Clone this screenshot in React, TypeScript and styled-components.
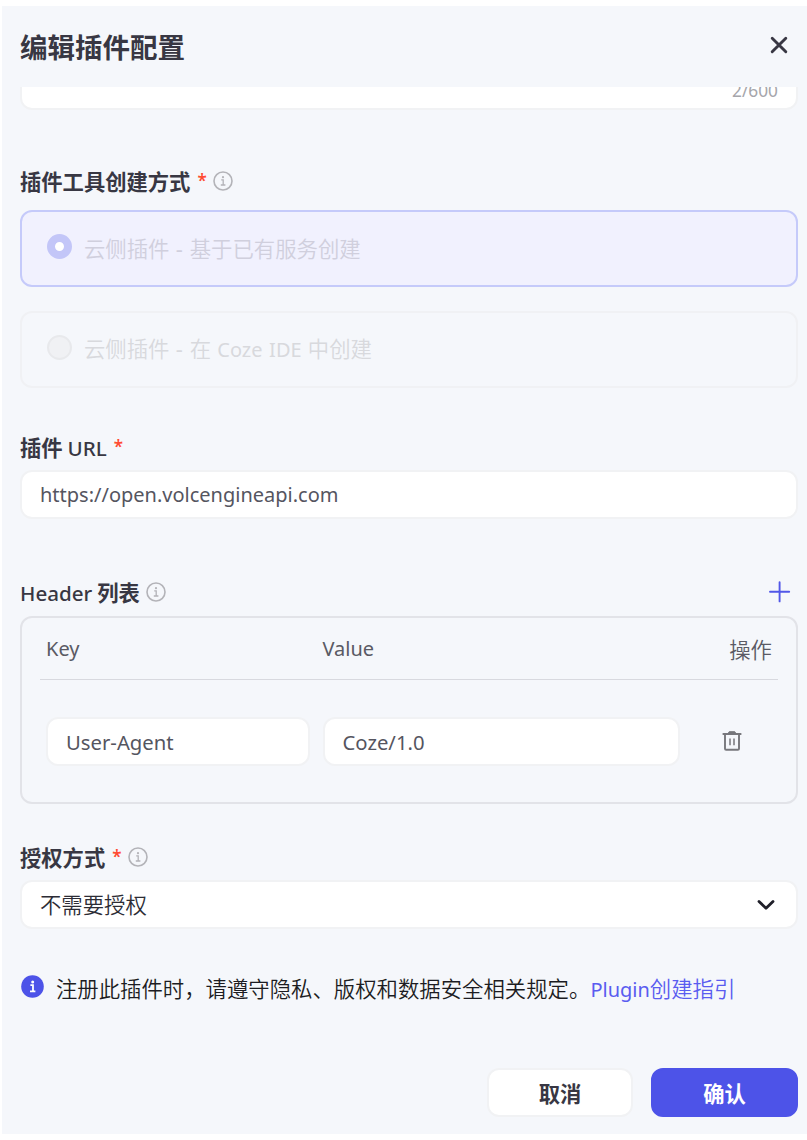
import React from "react";
import styled, { createGlobalStyle } from "styled-components";

const GlobalStyle = createGlobalStyle`
  * { box-sizing: border-box; }
  html, body { margin: 0; background: #fff; }
  body {
    font-family: "Noto Sans", "Noto Sans CJK SC", sans-serif;
    font-size: 21.3px;
    line-height: 28px;
    color: #3c3c47;
    -webkit-font-smoothing: antialiased;
  }
  button, input { font: inherit; color: inherit; }
`;

const Dialog = styled.section`
  display: flex;
  flex-direction: column;
  height: 1128px;
  margin: 6px 0 6px 2px;
  background: #f5f7fb;
  overflow: hidden;
`;

const DialogHeader = styled.header`
  display: flex;
  flex: none;
  align-items: center;
  justify-content: space-between;
  height: 81px;
  padding: 0 18px;
`;

const Title = styled.h1`
  margin: 0 0 2px;
  font: 700 27.5px/40px "Noto Sans CJK SC", sans-serif;
  color: #383743;
`;

const IconButton = styled.button`
  display: flex;
  padding: 0;
  border: 0;
  background: none;
`;

const CloseButton = styled(IconButton)`
  margin-bottom: 3px;
`;

const AddButton = styled(IconButton)`
  margin-bottom: 2px;
`;

const DialogBody = styled.div`
  display: flex;
  flex: 1;
  flex-direction: column;
  min-height: 0;
  padding: 0 9px 0 18px;
  overflow: hidden;
`;

const DescriptionBox = styled.div`
  display: flex;
  flex: none;
  align-items: flex-end;
  justify-content: flex-end;
  height: 71px;
  margin-top: -48px;
  padding: 0 18px 5px;
  border: 2px solid #f1f2f4;
  border-radius: 12px;
  background: #fff;
`;

const Counter = styled.span`
  font-size: 17.3px;
  line-height: 24px;
  color: #a6a6ab;
`;

const Field = styled.div<{ $top: number; $gap?: number }>`
  display: flex;
  flex: none;
  flex-direction: column;
  gap: ${({ $gap = 8 }) => $gap}px;
  margin-top: ${({ $top }) => $top}px;
`;

const LabelRow = styled.div`
  display: flex;
  align-items: center;
  height: 28px;
`;

const Label = styled.span`
  margin-bottom: 2px;
  font-weight: 700;
  font-family: "Noto Sans CJK SC", sans-serif;
  color: #383743;
  white-space: pre;
`;

const LabelLatin = styled.span`
  font: 500 20.6px/28px "Noto Sans", sans-serif;
`;

const Required = styled.span`
  margin: 0 0 3px 7px;
  font: 600 17px/28px "Noto Sans", sans-serif;
  color: #ff4b33;
`;

const InfoSlot = styled.span`
  display: flex;
  margin-left: 6px;
  margin-bottom: 2px;
`;

const Options = styled.div`
  display: flex;
  flex-direction: column;
  gap: 24px;
`;

const Option = styled.div<{ $selected?: boolean }>`
  display: flex;
  align-items: center;
  gap: 12px;
  height: 77px;
  padding: 0 25px;
  border: 2px solid ${({ $selected }) => ($selected ? "#c5cafa" : "#f0f1f4")};
  border-radius: 12px;
  background: ${({ $selected }) => ($selected ? "#f1f1fe" : "transparent")};
  color: ${({ $selected }) => ($selected ? "#d0cfdd" : "#d8d9dd")};
`;

const Radio = styled.span<{ $selected?: boolean }>`
  width: 25px;
  height: 25px;
  margin-bottom: 4px;
  border: ${({ $selected }) => ($selected ? "8px solid #c3c6f8" : "2px solid #e8e9ec")};
  border-radius: 50%;
  background: ${({ $selected }) => ($selected ? "#fff" : "#f0f1f4")};
`;

const Latin = styled.span<{ $spacing?: number; $size?: number }>`
  font-family: "Noto Sans", sans-serif;
  font-weight: 400;
  font-size: ${({ $size = 20 }) => $size}px;
  letter-spacing: ${({ $spacing = 0 }) => $spacing}px;
  white-space: pre;
`;

const CjkText = styled.span`
  margin-bottom: 1px;
  font-family: "Noto Sans CJK SC", sans-serif;
  font-size: 21.38px;
  font-weight: 350;
  word-spacing: 1.4px;
  white-space: pre;
`;

const InputBox = styled.div`
  display: flex;
  align-items: center;
  justify-content: space-between;
  height: 49px;
  padding: 0 18px;
  border: 2px solid #f1f2f4;
  border-radius: 12px;
  background: #fff;
  color: #55555f;
`;

const SelectBox = styled(InputBox)`
  color: #2c2c35;
`;

const SpreadRow = styled(LabelRow)`
  justify-content: space-between;
  padding-right: 7px;
`;

const Table = styled.div`
  height: 188px;
  padding: 0 18px;
  border: 2px solid #e2e3e8;
  border-radius: 12px;
`;

const TableRow = styled.div`
  display: grid;
  grid-template-columns: 264px 357px 1fr;
  column-gap: 12.5px;
  align-items: center;
  padding-left: 6px;
`;

const TableHead = styled(TableRow)`
  height: 62px;
  padding-top: 1px;
  border-bottom: 1px solid #d8d9df;
  color: #5a5a64;
`;

const TableBody = styled(TableRow)`
  height: 123px;
`;

const ActionHead = styled(CjkText)`
  justify-self: end;
  padding-right: 6px;
`;

const ActionCell = styled.div`
  display: flex;
  padding: 0 0 2px 30px;
`;

const Notice = styled.div`
  display: flex;
  flex: none;
  align-items: center;
  height: 28px;
  margin-top: 46px;
  color: #1c1c22;
`;

const NoticeIcon = styled.span`
  display: flex;
  margin: 0 12px 5px 1px;
`;

const GuideLink = styled.a`
  color: #5a5cf0;
  text-decoration: none;
`;

const DialogFooter = styled.footer`
  display: flex;
  flex: none;
  justify-content: flex-end;
  gap: 18px;
  padding: 0 9px 17px;
`;

const Button = styled.button<{ $primary?: boolean }>`
  width: ${({ $primary }) => ($primary ? 147 : 146)}px;
  height: 49px;
  padding: 0;
  border: 2px solid ${({ $primary }) => ($primary ? "#4d53e8" : "#f1f2f4")};
  border-radius: 12px;
  background: ${({ $primary }) => ($primary ? "#4d53e8" : "#fff")};
  font: 700 21.3px/28px "Noto Sans CJK SC", sans-serif;
  color: ${({ $primary }) => ($primary ? "#fff" : "#383743")};
`;

const InfoIcon = () => (
  <svg width="20" height="20" viewBox="0 0 20 20" fill="none" stroke="#b3b3b8">
    <circle cx="10" cy="10" r="9" strokeWidth="1.6" />
    <path d="M8.2 8.8h2v5M7.8 14h4.6" strokeWidth="1.3" />
    <circle cx="10" cy="6.2" r="1.1" fill="#b3b3b8" stroke="none" />
  </svg>
);

const FilledInfoIcon = () => (
  <svg width="23" height="23" viewBox="0 0 23 23" fill="none">
    <circle cx="11.5" cy="11.5" r="11.3" fill="#4d53e8" />
    <path d="M9.4 10.2h2.6v6M9 16.3h5.4" stroke="#fff" strokeWidth="1.8" />
    <circle cx="11.7" cy="7" r="1.5" fill="#fff" />
  </svg>
);

const CloseIcon = () => (
  <svg width="20" height="20" viewBox="0 0 20 20" fill="none">
    <path d="M3.2 3.2l13.6 13.6M16.8 3.2L3.2 16.8" stroke="#383743" strokeWidth="2.9" strokeLinecap="round" />
  </svg>
);

const PlusIcon = () => (
  <svg width="22" height="22" viewBox="0 0 22 22" fill="none">
    <path d="M10.6 1.2v19.2M1 10.8h19.2" stroke="#5157e8" strokeWidth="1.9" strokeLinecap="round" />
  </svg>
);

const TrashIcon = () => (
  <svg width="20" height="22" viewBox="0 0 20 22" fill="none" stroke="#77777c">
    <path d="M1.3 4h17.4" strokeWidth="1.8" strokeLinecap="round" />
    <path d="M6.2 3.4l1-1.7h5.6l1 1.7z" fill="#77777c" strokeWidth="1" strokeLinejoin="round" />
    <path d="M3 4.5v14.2q0 1.1 1.1 1.1h11.8q1.1 0 1.1-1.1V4.5" strokeWidth="1.9" />
    <path d="M8 8.4v6.8M12 8.4v6.8" strokeWidth="1.5" />
  </svg>
);

const ChevronIcon = () => (
  <svg width="20" height="14" viewBox="0 0 20 14" fill="none">
    <path d="M3 3.4l7 6.9 7-6.9" stroke="#1f1f29" strokeWidth="2.8" strokeLinecap="round" strokeLinejoin="round" />
  </svg>
);

const ChevronSlot = styled.span`
  display: flex;
  padding-right: 2px;
`;

export default function App() {
  return (
    <>
      <GlobalStyle />
      <Dialog>
        <DialogHeader>
          <Title>编辑插件配置</Title>
          <CloseButton aria-label="关闭">
            <CloseIcon />
          </CloseButton>
        </DialogHeader>

        <DialogBody>
          <DescriptionBox>
            <Counter>2/600</Counter>
          </DescriptionBox>

          <Field $top={58} $gap={14}>
            <LabelRow>
              <Label>插件工具创建方式</Label>
              <Required>*</Required>
              <InfoSlot>
                <InfoIcon />
              </InfoSlot>
            </LabelRow>
            <Options>
              <Option $selected>
                <Radio $selected />
                <CjkText>云侧插件 <Latin $size={22} $spacing={0.8}>-</Latin> 基于已有服务创建</CjkText>
              </Option>
              <Option>
                <Radio />
                <CjkText>云侧插件 <Latin $size={22} $spacing={0.8}>-</Latin> 在 <Latin $size={20}>Coze IDE</Latin> 中创建</CjkText>
              </Option>
            </Options>
          </Field>

          <Field $top={46}>
            <LabelRow>
              <Label>
                插件 <LabelLatin>URL</LabelLatin>
              </Label>
              <Required>*</Required>
            </LabelRow>
            <InputBox>
              <Latin>https://open.volcengineapi.com</Latin>
            </InputBox>
          </Field>

          <Field $top={60} $gap={9}>
            <SpreadRow>
              <LabelRow>
                <Label>
                  <LabelLatin>Header</LabelLatin> 列表
                </Label>
                <InfoSlot>
                  <InfoIcon />
                </InfoSlot>
              </LabelRow>
              <AddButton aria-label="添加">
                <PlusIcon />
              </AddButton>
            </SpreadRow>
            <Table>
              <TableHead>
                <Latin>Key</Latin>
                <Latin>Value</Latin>
                <ActionHead>操作</ActionHead>
              </TableHead>
              <TableBody>
                <InputBox>
                  <Latin $size={20.3}>User-Agent</Latin>
                </InputBox>
                <InputBox>
                  <Latin $size={20.3}>Coze/1.0</Latin>
                </InputBox>
                <ActionCell>
                  <IconButton aria-label="删除">
                    <TrashIcon />
                  </IconButton>
                </ActionCell>
              </TableBody>
            </Table>
          </Field>

          <Field $top={40}>
            <LabelRow>
              <Label>授权方式</Label>
              <Required>*</Required>
              <InfoSlot>
                <InfoIcon />
              </InfoSlot>
            </LabelRow>
            <SelectBox>
              <CjkText>不需要授权</CjkText>
              <ChevronSlot>
                <ChevronIcon />
              </ChevronSlot>
            </SelectBox>
          </Field>

          <Notice>
            <NoticeIcon>
              <FilledInfoIcon />
            </NoticeIcon>
            <CjkText>
              注册此插件时，请遵守隐私、版权和数据安全相关规定。
              <GuideLink>
                <Latin>Plugin</Latin>创建指引
              </GuideLink>
            </CjkText>
          </Notice>
        </DialogBody>

        <DialogFooter>
          <Button>取消</Button>
          <Button $primary>确认</Button>
        </DialogFooter>
      </Dialog>
    </>
  );
}
